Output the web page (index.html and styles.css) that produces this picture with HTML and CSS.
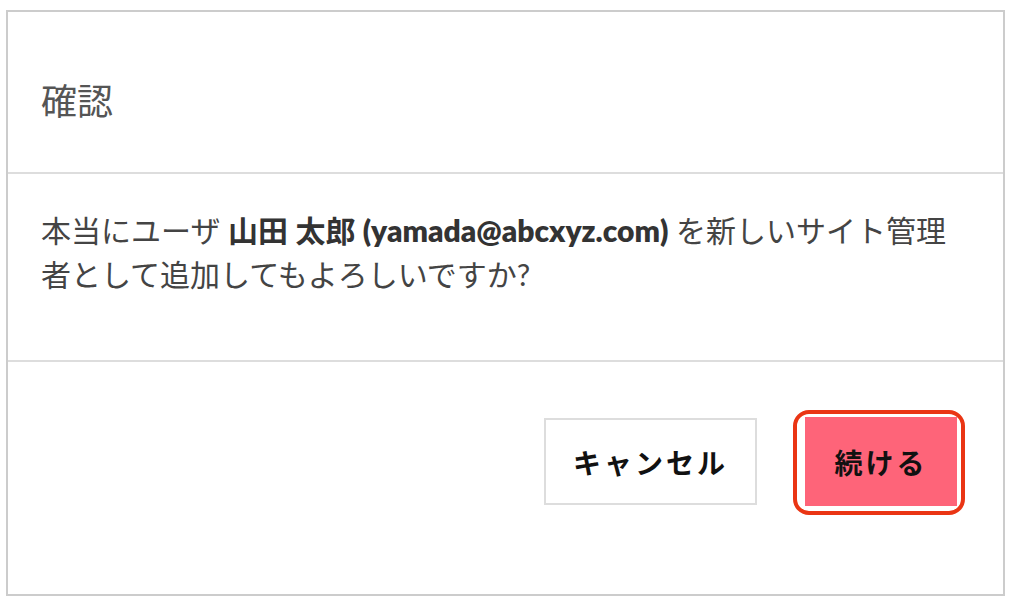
FILE: index.html
```html
<!DOCTYPE html>
<html lang="ja">
<head>
<meta charset="utf-8">
<title>確認</title>
<link rel="stylesheet" href="styles.css">
</head>
<body>
<div class="dialog">
  <div class="dialog-header">
    <h1 class="dialog-title">確認</h1>
  </div>
  <div class="dialog-body">
    <p class="dialog-text">本当にユーザ <strong>山田 太郎 <span class="email">(yamada@abcxyz.com)</span></strong> を新しいサイト管理者として追加してもよろしいですか?</p>
  </div>
  <div class="dialog-footer">
    <button class="btn btn-cancel" type="button">キャンセル</button>
    <button class="btn btn-primary is-focused" type="button">続ける</button>
  </div>
</div>
</body>
</html>
```

FILE: styles.css
```css
html, body {
  margin: 0;
  padding: 0;
  background: #ffffff;
}

body {
  font-family: Lato, "Noto Sans CJK JP", sans-serif;
}

.dialog {
  box-sizing: border-box;
  margin: 10px 0 0 6px;
  width: 999px;
  height: 586px;
  border: 2px solid #cccccc;
  display: flex;
  flex-direction: column;
}

.dialog-header {
  box-sizing: border-box;
  height: 162px;
  padding: 71px 33px 0;
  border-bottom: 2px solid #dddddd;
}

.dialog-title {
  margin: 0;
  font-size: 36px;
  line-height: 36px;
  font-weight: 400;
  color: #555555;
}

.dialog-body {
  box-sizing: border-box;
  height: 188px;
  padding: 34px 48px 0 33px;
  border-bottom: 2px solid #dddddd;
}

.dialog-text {
  margin: 0;
  font-size: 30px;
  line-height: 44px;
  color: #444444;
}

.dialog-text strong {
  font-weight: 700;
  color: #333333;
}

.dialog-text .email {
  font-weight: 800;
}

.dialog-footer {
  flex: 1;
  display: flex;
  justify-content: flex-end;
  align-items: flex-start;
  gap: 48px;
  padding: 55px 46px 0 0;
}

.btn {
  box-sizing: border-box;
  height: 88px;
  margin: 0;
  font-family: "Noto Sans CJK JP", sans-serif;
  font-size: 28px;
  font-weight: 700;
  letter-spacing: 3px;
  color: #111111;
  cursor: pointer;
  position: relative;
}

.btn-cancel {
  width: 213px;
  margin-top: 1px;
  height: 87px;
  background: #ffffff;
  border: 2px solid #dddddd;
}

.btn-primary {
  width: 152px;
  height: 89px;
  background: #fe6479;
  border: none;
}

.is-focused::after {
  content: "";
  position: absolute;
  left: -12px;
  right: -8px;
  top: -7px;
  bottom: -9px;
  border: 4px solid #ea3514;
  border-radius: 16px;
  pointer-events: none;
}
```
